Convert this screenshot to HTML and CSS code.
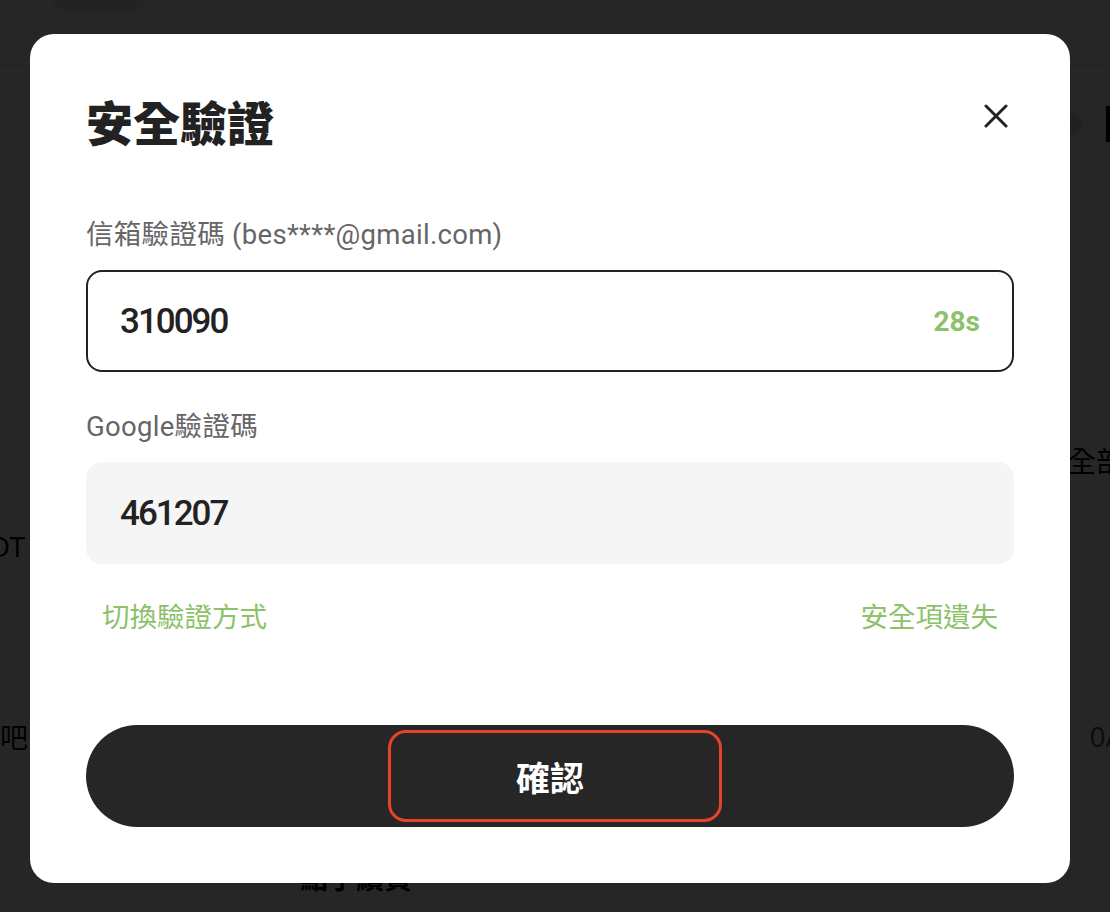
FILE: index.html
```html
<!DOCTYPE html>
<html lang="zh-Hant">
<head>
    <meta charset="UTF-8">
    <meta name="viewport" content="width=device-width, initial-scale=1.0">
    <title>安全驗證</title>
    <link rel="stylesheet" href="styles.css">
</head>
<body>

    <!-- page behind the dialog -->
    <div class="page">
        <header class="page-header">
            <div class="logo-pill"></div>
        </header>
        <section class="page-top">
            <span class="circle-icon"></span>
            <span class="black-bar"></span>
        </section>
        <section class="page-band"></section>
        <div class="page-row row-tabs"><span class="tab-all">全部</span></div>
        <div class="page-row row-coin"><span class="coin-name">USDT</span></div>
        <div class="page-row row-input">
            <span class="input-hint">加油吧</span>
            <span class="input-count">0/</span>
        </div>
        <div class="page-row row-note"><span class="note-text">點子續費</span></div>
    </div>

    <div class="overlay"></div>

    <div class="modal">
        <div class="modal-header">
            <h2 class="modal-title">安全驗證</h2>
            <button class="close-btn" aria-label="close">
                <svg width="24" height="24" viewBox="0 0 24 24">
                    <path d="M2 2 L22 22 M22 2 L2 22" stroke="#222" stroke-width="3" stroke-linecap="round" fill="none"/>
                </svg>
            </button>
        </div>

        <div class="form-group first">
            <div class="field-label">信箱驗證碼 (bes****@gmail.com)</div>
            <div class="field field-outline">
                <span class="field-value">310090</span>
                <span class="countdown">28s</span>
            </div>
        </div>

        <div class="form-group">
            <div class="field-label">Google驗證碼</div>
            <div class="field field-filled">
                <span class="field-value">461207</span>
            </div>
        </div>

        <div class="links">
            <a class="link">切換驗證方式</a>
            <a class="link">安全項遺失</a>
        </div>

        <button class="confirm-btn">
            <span class="confirm-focus">確認</span>
        </button>
    </div>

</body>
</html>
```

FILE: styles.css
```css
body {
    margin: 0;
    padding: 0;
    height: 912px;
    overflow: hidden;
    background-color: #fff;
    font-family: "Noto Sans", "Noto Sans CJK TC", sans-serif;
}

/* background page */
.page {
    width: 100%;
    overflow: hidden;
}

.page-header {
    height: 64px;
    border-bottom: 1px solid #e2e2e2;
    overflow: hidden;
}

.logo-pill {
    width: 102px;
    height: 50px;
    margin-top: -37px;
    margin-left: 48px;
    border-radius: 25px;
    background-color: #e9e9e9;
}

.page-top {
    height: 117px;
    border-bottom: 1px solid #ececec;
    display: flex;
    justify-content: flex-end;
    align-items: center;
    gap: 24px;
    margin-right: -6px;
    background-color: #fbfbfb;
}

.circle-icon {
    width: 22px;
    height: 22px;
    border-radius: 50%;
    background-color: #dcdcdc;
}

.black-bar {
    width: 10px;
    height: 36px;
    background-color: #000;
}

.page-band {
    height: 216px;
    background-color: #fdfdfd;
    border-bottom: 1px solid #eee;
}

.page-row {
    display: flex;
    align-items: center;
    font-size: 28px;
    color: #000;
    white-space: nowrap;
}

.row-tabs {
    height: 120px;
    justify-content: flex-end;
    border-bottom: 1px solid #f0f0f0;
}

.tab-all {
    margin-right: -14px;
}

.row-coin {
    height: 50px;
}

.coin-name {
    margin-left: -46px;
}

.row-input {
    margin-top: 140px;
    height: 50px;
    justify-content: space-between;
}

.input-hint {
    margin-left: -56px;
    color: #111;
}

.input-count {
    margin-right: -6px;
    color: #555;
}

.row-note {
    margin-top: 96px;
    height: 40px;
    padding-left: 300px;
    font-weight: bold;
}

.overlay {
    position: fixed;
    top: 0;
    left: 0;
    width: 100%;
    height: 100%;
    background-color: rgba(0, 0, 0, 0.85);
}

/* dialog */
.modal {
    position: fixed;
    top: 34px;
    left: 30px;
    width: 1040px;
    box-sizing: border-box;
    padding: 62px 56px 56px;
    background-color: #fff;
    border-radius: 24px;
}

.modal-header {
    display: flex;
    justify-content: space-between;
    align-items: center;
    height: 55px;
}

.modal-title {
    margin: 0;
    font-size: 47px;
    line-height: 55px;
    font-weight: 900;
    color: #222;
}

.close-btn {
    width: 36px;
    height: 36px;
    padding: 0;
    margin-top: -16px;
    border: none;
    background: none;
    display: flex;
    justify-content: center;
    align-items: center;
    cursor: pointer;
}

.form-group {
    margin-top: 35px;
}

.form-group.first {
    margin-top: 64px;
}

.field-label {
    font-family: Roboto, "Noto Sans CJK TC", sans-serif;
    font-size: 27.5px;
    line-height: 40px;
    letter-spacing: 0.3px;
    color: #666;
    margin-bottom: 15px;
}

.field {
    height: 102px;
    box-sizing: border-box;
    padding: 0 32px;
    border-radius: 16px;
    display: flex;
    justify-content: space-between;
    align-items: center;
}

.field-outline {
    border: 2px solid #222;
}

.field-filled {
    background-color: #f5f5f5;
    padding-left: 34px;
}

.field-value {
    font-family: Roboto, "Noto Sans", sans-serif;
    font-size: 35px;
    font-weight: 500;
    letter-spacing: -2px;
    color: #222;
}

.countdown {
    font-family: Roboto, "Noto Sans", sans-serif;
    font-size: 28px;
    font-weight: bold;
    color: #8dc26b;
}

.links {
    display: flex;
    justify-content: space-between;
    margin-top: 33px;
}

.link {
    padding: 0 16px;
    font-size: 27.5px;
    line-height: 40px;
    color: #8dc26b;
    cursor: pointer;
}

.confirm-btn {
    width: 100%;
    height: 102px;
    margin-top: 88px;
    border: none;
    border-radius: 51px;
    background-color: #262626;
    display: flex;
    justify-content: center;
    align-items: center;
    cursor: pointer;
    font-family: "Noto Sans", "Noto Sans CJK TC", sans-serif;
}

.confirm-focus {
    width: 334px;
    height: 92px;
    margin-left: 10px;
    padding-right: 10px;
    box-sizing: border-box;
    border: 3px solid #e5432a;
    border-radius: 18px;
    display: flex;
    justify-content: center;
    align-items: center;
    font-size: 34px;
    font-weight: bold;
    color: #fff;
}
```
